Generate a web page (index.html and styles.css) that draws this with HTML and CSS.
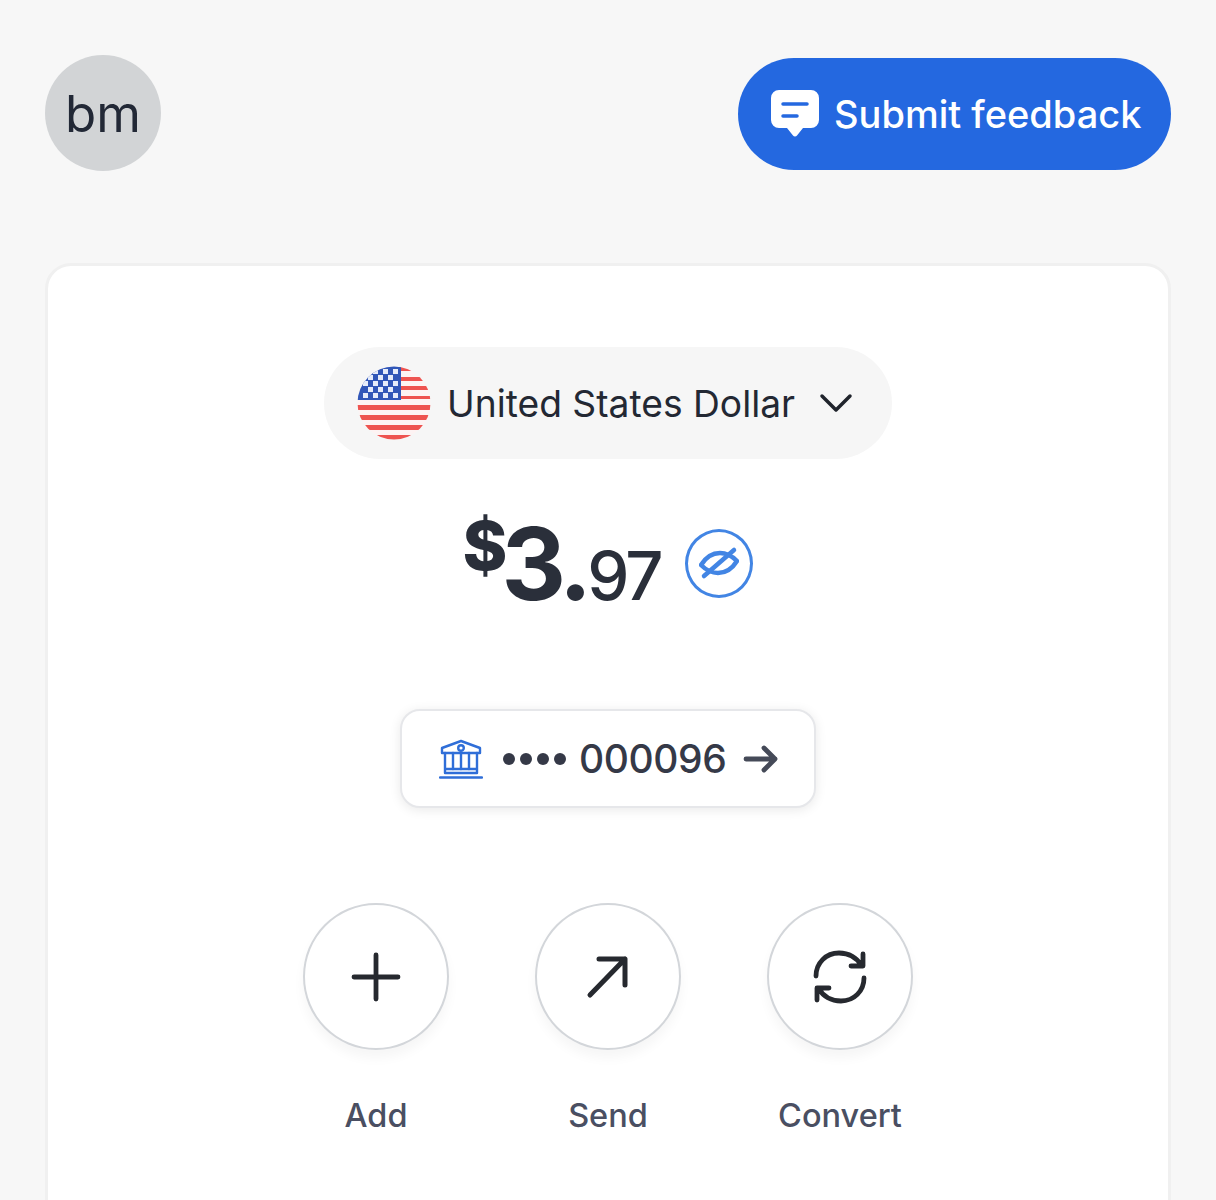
FILE: index.html
```html
<!DOCTYPE html>
<html lang="en">
<head>
<meta charset="utf-8">
<title>Wallet</title>
<link rel="stylesheet" href="styles.css">
</head>
<body>
<header class="topbar">
  <div class="avatar">bm</div>
  <button class="feedback">
    <svg class="feedback-icon" viewBox="0 0 48 48" width="48" height="48">
      <path d="M8 0H40A8 8 0 0 1 48 8V30A8 8 0 0 1 40 38H32L26 45.500A2.500 2.500 0 0 1 22 45.500L16 38H8A8 8 0 0 1 0 30V8A8 8 0 0 1 8 0Z" fill="#fff"/>
      <path d="M12 14H36M12 26H26" stroke="#2468e0" stroke-width="3.500" stroke-linecap="round" fill="none"/>
    </svg>
    <span>Submit feedback</span>
  </button>
</header>
<main class="card">
  <button class="currency">
    <svg class="flag" viewBox="0 0 74 74" width="74" height="74">
      <defs><clipPath id="flagclip"><circle cx="37" cy="37" r="36.500"/></clipPath></defs>
      <g clip-path="url(#flagclip)">
        <rect width="74" height="74" fill="#fdf3f3"/>
        <g fill="#ee5350">
          <rect x="40" y="1" width="34" height="4"/>
          <rect x="40" y="11" width="34" height="4"/>
          <rect x="40" y="20" width="34" height="4"/>
          <rect x="40" y="30" width="34" height="3"/>
          <rect y="39" width="74" height="5"/>
          <rect y="49" width="74" height="5"/>
          <rect y="59" width="74" height="5"/>
          <rect y="69" width="74" height="5"/>
        </g>
        <rect width="44" height="34" fill="#3157b8"/>
        <g fill="#e6ecfa">
          <rect x="16" y="3" width="5" height="5"/><rect x="26" y="3" width="5" height="5"/><rect x="36" y="3" width="5" height="5"/>
          <rect x="11" y="9" width="5" height="5"/><rect x="21" y="9" width="5" height="5"/><rect x="31" y="9" width="5" height="5"/>
          <rect x="6" y="15" width="5" height="5"/><rect x="16" y="15" width="5" height="5"/><rect x="26" y="15" width="5" height="5"/><rect x="36" y="15" width="5" height="5"/>
          <rect x="11" y="21" width="5" height="5"/><rect x="21" y="21" width="5" height="5"/><rect x="31" y="21" width="5" height="5"/>
          <rect x="6" y="27" width="5" height="5"/><rect x="16" y="27" width="5" height="5"/><rect x="26" y="27" width="5" height="5"/><rect x="36" y="27" width="5" height="5"/>
        </g>
      </g>
    </svg>
    <span class="currency-name">United States Dollar</span>
    <svg class="chevron" viewBox="0 0 34 22" width="34" height="22"><path d="M3 4L17 18L31 4" fill="none" stroke="#20242c" stroke-width="3.500" stroke-linecap="round" stroke-linejoin="round"/></svg>
  </button>
  <div class="balance">
    <div class="amount"><span class="sym">$</span><span class="whole">3.</span><span class="cents">97</span></div>
    <button class="eye">
      <svg viewBox="0 0 40 34" width="40" height="34" fill="none" stroke="#4285e4" stroke-width="4.500" stroke-linecap="round" stroke-linejoin="round">
        <path d="M2 19C7 11 14 7 21 7C27 7 33 10 38 15C33 23 26 27 19 27C13 27 7 24 2 19Z"/>
        <path d="M5 30L35 4"/>
      </svg>
    </button>
  </div>
  <button class="account">
    <svg class="bank" viewBox="0 0 44 40" width="44" height="40" fill="none" stroke="#2f6ed8" stroke-width="2.400" stroke-linejoin="round" stroke-linecap="round">
      <path d="M3 14V9L22 2L41 9V14H3Z"/>
      <circle cx="22" cy="9" r="2.800"/>
      <path d="M6 14V30M38 14V30M6 30H38V34H6V30Z"/>
      <path d="M14 14V30M22 14V30M30 14V30"/>
      <path d="M1 38.500H43"/>
    </svg>
    <span class="dots"><i></i><i></i><i></i><i></i></span>
    <span class="acct-no">000096</span>
    <svg class="arrow" viewBox="0 0 36 30" width="36" height="30" fill="none" stroke="#454a58" stroke-width="4.800" stroke-linecap="round" stroke-linejoin="round"><path d="M3 15H32M21 4L32 15L21 26"/></svg>
  </button>
  <section class="actions">
    <div class="action">
      <button class="round"><svg viewBox="0 0 50 50" width="50" height="50" fill="none" stroke="#26292f" stroke-width="4.800" stroke-linecap="round"><path d="M25 3V47M3 25H47"/></svg></button>
      <span class="action-label">Add</span>
    </div>
    <div class="action">
      <button class="round"><svg viewBox="0 0 44 44" width="44" height="44" fill="none" stroke="#26292f" stroke-width="5" stroke-linecap="round" stroke-linejoin="round"><path d="M4 40L39 4M13 4H39V30"/></svg></button>
      <span class="action-label">Send</span>
    </div>
    <div class="action">
      <button class="round"><svg viewBox="0 0 54 54" width="54" height="54" fill="none" stroke="#26292f" stroke-width="4.800" stroke-linecap="round" stroke-linejoin="round"><path d="M3 26C3 13 13 3 26 3C36 3 44 8 48 15M50 4V16H38"/><path d="M51 28C51 41 41 51 28 51C18 51 10 46 6 39M4 50V38H16"/></svg></button>
      <span class="action-label">Convert</span>
    </div>
  </section>
</main>
</body>
</html>
```
FILE: styles.css
```css
* { box-sizing: border-box; }
html, body { margin: 0; height: 1200px; overflow: hidden; }
body {
  background: #f7f7f7;
  font-family: Inter, "Noto Sans", sans-serif;
  padding: 55px 45px 0 45px;
}
button { font-family: inherit; border: 0; padding: 0; cursor: pointer; }

.topbar { display: flex; justify-content: space-between; align-items: flex-start; }
.avatar {
  width: 116px; height: 116px; border-radius: 50%;
  background: #d2d4d6; color: #222836;
  display: flex; align-items: center; justify-content: center;
  font-size: 51px; font-weight: 400;
}
.feedback {
  width: 433px; height: 112px; border-radius: 56px; margin-top: 3px;
  background: #2468e0; color: #fff;
  display: flex; align-items: center; gap: 15px;
  padding-left: 33px;
  font-size: 38px; font-weight: 500;
}
.feedback-icon { flex: none; }

.card {
  margin-top: 92px; height: 1000px;
  background: #fff; border: 3px solid #f0f0f0; border-radius: 26px;
  display: flex; flex-direction: column; align-items: center;
  padding-top: 81px;
}
.currency {
  width: 568px; height: 112px; border-radius: 56px;
  background: #f6f6f6; color: #232833;
  display: flex; align-items: center;
  padding-left: 33px;
  font-size: 37.200px;
}
.flag { flex: none; margin-right: 16px; }
.currency-name { flex: none; }
.chevron { flex: none; margin-left: 24px; }

.balance {
  display: flex; align-items: center; gap: 25px;
  margin-top: 50px; height: 108px;
  color: #2a2f3a;
}
.amount { display: flex; align-items: baseline; }
.sym { font-size: 68px; font-weight: 800; position: relative; top: -30px; letter-spacing: -6px; }
.whole { font-size: 100px; font-weight: 700; letter-spacing: -5px; }
.cents { font-size: 67px; font-weight: 500; letter-spacing: -3px; }
.eye {
  width: 68px; height: 69px; border-radius: 50%;
  background: #fff; border: 3px solid #4285e4;
  display: flex; align-items: center; justify-content: center;
}

.account {
  margin-top: 92px; width: 416px; height: 99px; border-radius: 20px;
  background: #fff; border: 2px solid #e6e7ea;
  box-shadow: 0 2px 12px rgba(0,0,0,.09);
  color: #353947;
  display: flex; align-items: center;
  padding-left: 37px;
  font-size: 39px; font-weight: 500;
}
.bank { flex: none; }
.dots { display: flex; gap: 5px; margin-left: 20px; }
.dots i { width: 12px; height: 12px; border-radius: 50%; background: #353947; display: block; }
.acct-no { margin-left: 13px; letter-spacing: -.4px; }
.arrow { flex: none; margin-left: 17px; }

.actions { display: flex; gap: 86px; margin-top: 95px; }
.action { width: 146px; display: flex; flex-direction: column; align-items: center; }
.round {
  width: 146px; height: 147px; border-radius: 50%;
  background: #fff; border: 2px solid #d3d6da;
  box-shadow: 0 8px 12px rgba(0,0,0,.04);
  display: flex; align-items: center; justify-content: center;
}
.action-label {
  margin-top: 46px; font-size: 32.500px; font-weight: 500; color: #4a4f62;
}
```
